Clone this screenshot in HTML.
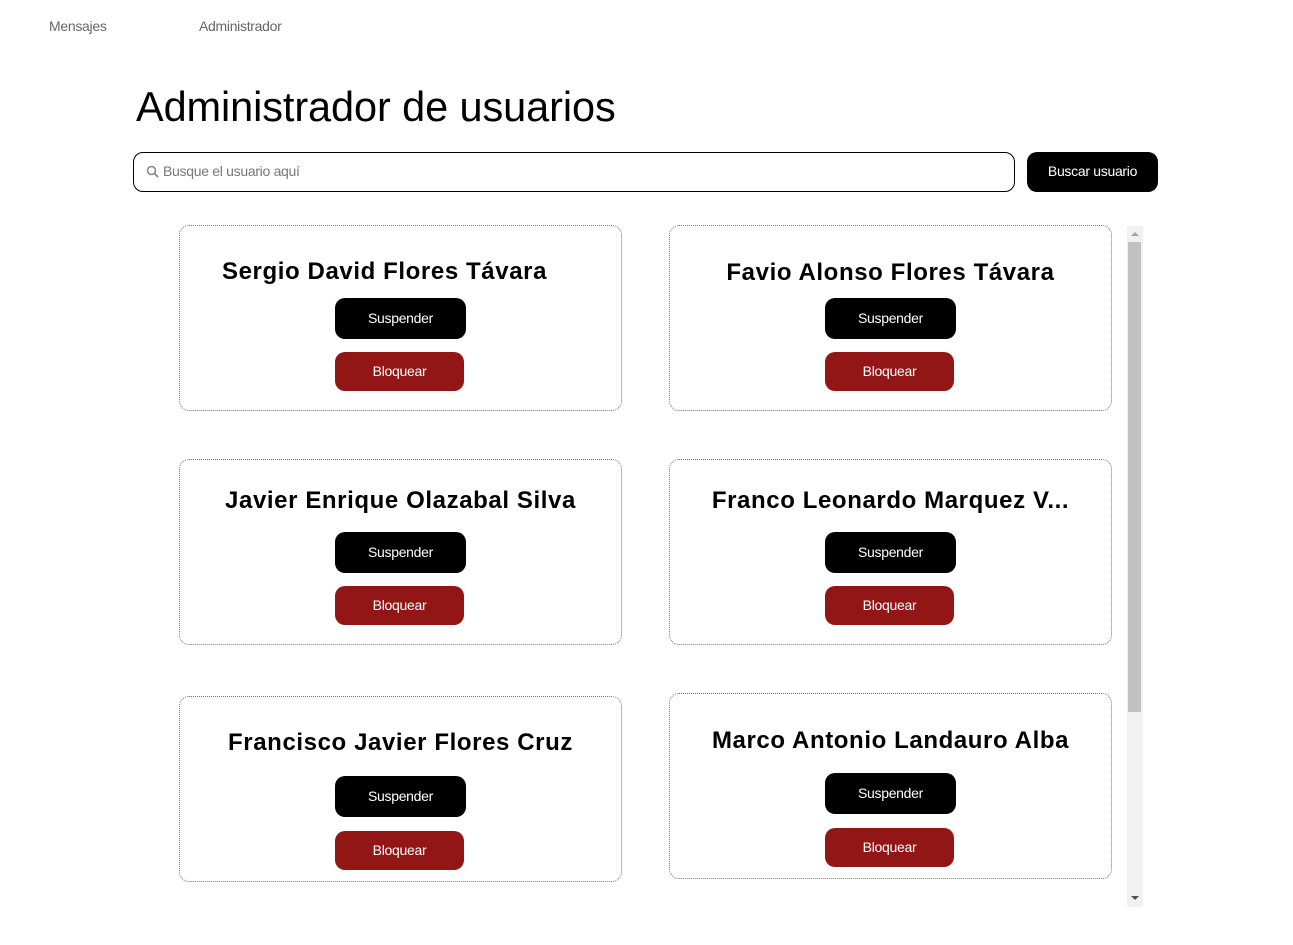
<!DOCTYPE html>
<html><head><meta charset="utf-8"><style>
*{margin:0;padding:0;box-sizing:border-box}
body{width:1293px;height:945px;background:#fff;font-family:"Liberation Sans",Arial,sans-serif;position:relative;overflow:hidden}
.a{position:absolute}
.nav{font-size:14px;color:#666;top:18px;letter-spacing:-0.3px}
h1{position:absolute;left:136px;top:83px;font-size:41.5px;font-weight:normal;color:#000;letter-spacing:-0.1px}
.search{left:133px;top:152px;width:882px;height:40px;border:1px solid #000;border-radius:10px}
.search span{position:absolute;left:29px;top:10px;font-size:14px;color:#777;letter-spacing:-0.3px}
.btn{position:absolute;border-radius:10px;color:#fff;font-size:14px;display:flex;align-items:center;justify-content:center;letter-spacing:-0.3px;padding-bottom:2px}
.card{position:absolute;width:443px;height:186px;border:1px dotted #777;border-radius:10px}
.name{position:absolute;left:0;right:0;text-align:center;font-size:24px;font-weight:bold;letter-spacing:0.6px;color:#000;white-space:nowrap}
.s{background:#000;width:131px;height:41px;left:155px}
.b{background:#921616;width:129px;height:39px;left:155px}
</style></head><body>
<div class="a nav" style="left:49px">Mensajes</div>
<div class="a nav" style="left:199px">Administrador</div>
<h1>Administrador de usuarios</h1>
<div class="a search">
<svg class="a" style="left:12px;top:12px" width="14" height="14" viewBox="0 0 14 14"><circle cx="5.5" cy="5.5" r="4" fill="none" stroke="#888" stroke-width="1.6"/><path d="M8.5 8.5L12 12" stroke="#888" stroke-width="1.8"/></svg>
<span>Busque el usuario aquí</span></div>
<div class="btn" style="left:1027px;top:152px;width:131px;height:40px;background:#000">Buscar usuario</div>

<div class="card" style="left:179px;top:225px"><div class="name" style="top:32px;right:32px">Sergio David Flores Távara</div><div class="btn s" style="top:72px">Suspender</div><div class="btn b" style="top:126px">Bloquear</div></div>
<div class="card" style="left:669px;top:225px"><div class="name" style="top:33px">Favio Alonso Flores Távara</div><div class="btn s" style="top:72px">Suspender</div><div class="btn b" style="top:126px">Bloquear</div></div>
<div class="card" style="left:179px;top:459px"><div class="name" style="top:27px">Javier Enrique Olazabal Silva</div><div class="btn s" style="top:72px">Suspender</div><div class="btn b" style="top:126px">Bloquear</div></div>
<div class="card" style="left:669px;top:459px"><div class="name" style="top:27px">Franco Leonardo Marquez V...</div><div class="btn s" style="top:72px">Suspender</div><div class="btn b" style="top:126px">Bloquear</div></div>
<div class="card" style="left:179px;top:696px"><div class="name" style="top:32px">Francisco Javier Flores Cruz</div><div class="btn s" style="top:79px">Suspender</div><div class="btn b" style="top:134px">Bloquear</div></div>
<div class="card" style="left:669px;top:693px"><div class="name" style="top:33px">Marco Antonio Landauro Alba</div><div class="btn s" style="top:79px">Suspender</div><div class="btn b" style="top:134px">Bloquear</div></div>

<div class="a" style="left:1127px;top:226px;width:16px;height:681px;background:#f1f1f1"></div>
<div class="a" style="left:1128px;top:242px;width:13px;height:470px;background:#c1c1c1"></div>
<div class="a" style="left:1131px;top:232px;width:0;height:0;border-left:4px solid transparent;border-right:4px solid transparent;border-bottom:4px solid #a3a3a3"></div>
<div class="a" style="left:1131px;top:896px;width:0;height:0;border-left:4px solid transparent;border-right:4px solid transparent;border-top:4px solid #505050"></div>
</body></html>
